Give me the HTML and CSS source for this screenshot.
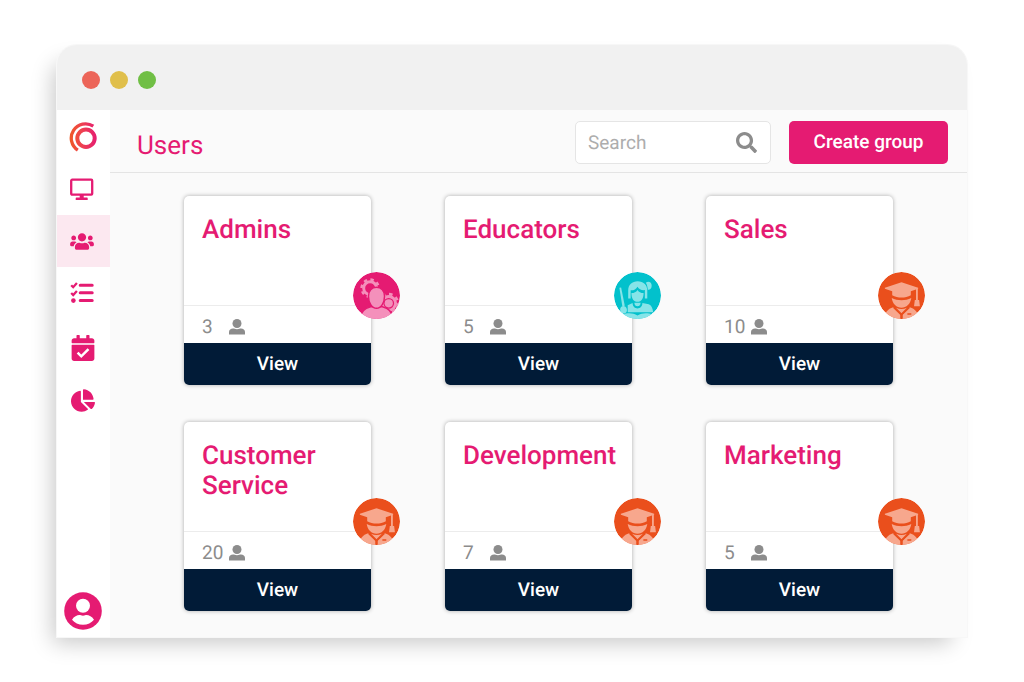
FILE: index.html
```html
<!DOCTYPE html>
<html lang="en">
<head>
<meta charset="utf-8">
<meta name="viewport" content="width=device-width, initial-scale=1">
<title>Users</title>
<link rel="stylesheet" href="styles.css">
</head>
<body>
<svg class="sprite" aria-hidden="true">
  <defs>
    <clipPath id="disc"><circle cx="24" cy="24" r="24"/></clipPath>
    <symbol id="person" viewBox="0 0 16 16">
      <circle cx="8" cy="4.500" r="4.500"/>
      <path d="M0 15.400V13c0-2.200 1.800-3.400 4-3.400 1.200 0 2 .6 4 .6s2.800-.6 4-.6c2.200 0 4 1.200 4 3.400v2.400z"/>
    </symbol>
    <symbol id="admin" viewBox="0 0 48 48">
      <g clip-path="url(#disc)">
        <circle cx="24" cy="24" r="24" fill="#e51b72"/>
        <g fill="none" stroke="#f490bb">
          <circle cx="17.500" cy="16.500" r="6.600" stroke-width="3"/>
          <circle cx="17.500" cy="16.500" r="8.800" stroke-width="2.400" stroke-dasharray="3.456 3.456"/>
          <circle cx="36.500" cy="32" r="7" stroke-width="3"/>
          <circle cx="36.500" cy="32" r="9.400" stroke-width="2.600" stroke-dasharray="3.690 3.690"/>
        </g>
        <circle cx="36.500" cy="32" r="4.200" fill="#f490bb"/>
        <path d="M7 50c0-9 4-13 11-14.500h12c7 1.500 11 5.500 11 14.500z" fill="#f490bb" stroke="#e51b72" stroke-width="1.500"/>
        <path d="M24 15.500c-5 0-8.200 3.800-8.200 9.200 0 6.300 3.400 12.300 8.200 12.300s8.200-6 8.200-12.300c0-5.400-3.200-9.200-8.200-9.200z" fill="#f490bb" stroke="#e51b72" stroke-width="1.500"/>
      </g>
    </symbol>
    <symbol id="educator" viewBox="0 0 48 48">
      <g clip-path="url(#disc)">
        <circle cx="24" cy="24" r="24" fill="#02c1cc"/>
        <g fill="#86e4e8">
          <path d="M32.500 11c3-2.200 6-.2 6 3 0 3-2.200 4.500-4 4-.2-2.800-.7-5-2-7z"/>
          <path d="M14.500 27V19c0-6 4-9.500 9.700-9.500S34 13 34 19v8h-2.500v-8.500c-3.500.4-6-1-7.500-3.500-1.500 2.500-3.800 3.900-7 3.700V27z"/>
          <path d="M17.800 21.500c3 0 4.700-1 6.200-3.200 1.500 2.200 3.300 3.200 6.200 3.200 0 6-2.200 9-6.200 9s-6.200-3.500-6.200-9z"/>
          <path d="M14 41V34l5-2.400c0 7.400 10 7.400 10 0l6.500 1.400c2.600 1 4 4 4.500 8z"/>
          <path d="M20.800 31.500h6.400c0 4.800-6.400 4.800-6.400 0z"/>
          <path d="M5.500 16.200l1.800-.3L11 34.500l-2.500.6z"/>
          <path d="M7.500 35.500c2-1.500 5-.5 5.600 2.300s-.8 4.700-3.200 4.700c-3 0-5-4.700-2.400-7z"/>
          <path d="M8 43.500c6-2 11-2 16 .8 5-2.800 10-2.800 16-.8V48H8z"/>
        </g>
      </g>
    </symbol>
    <symbol id="graduate" viewBox="0 0 48 48">
      <g clip-path="url(#disc)">
        <circle cx="24" cy="24" r="24" fill="#ea4f1c"/>
        <g fill="#f7a78d">
          <path d="M7 16l17-5.500L41 16v1.200l-7.500 2.500v4c-5.500 3.200-13.500 3.200-19 0v-4L7 17.200z"/>
          <path d="M38.800 17h1.900v11.500h1.300l.8 6.500h-6l.8-6.500h1.200z"/>
          <path d="M14 26.500c6 3 14 3 20 0-.8 6-5 10-10 10s-9.200-4-10-10z"/>
          <path d="M6 48c1-6.500 4-10.500 9.500-12l7.300 7.500V48zM42 48c-1-6.500-4-10.500-9.500-12l-7.300 7.500V48z"/>
          <path d="M18.500 36.500c3.400 1.800 7.600 1.800 11 0L24 42z"/>
        </g>
        <path d="M16 36.200l7.900 7.600 8.100-7.600M24 43v5M30 42.800h4" fill="none" stroke="#ea4f1c" stroke-width="1.500"/>
      </g>
    </symbol>
  </defs>
</svg>

<div class="window">
  <div class="titlebar">
    <span class="dot dot-red"></span>
    <span class="dot dot-yellow"></span>
    <span class="dot dot-green"></span>
  </div>
  <div class="app">
    <nav class="sidebar" aria-label="Main">
      <a class="logo" href="#" aria-label="Home">
        <svg width="28" height="30" viewBox="0 0 28 30" fill="none">
          <defs>
            <linearGradient id="flame" gradientUnits="userSpaceOnUse" x1="0" y1="0" x2="28" y2="0">
              <stop offset="0" stop-color="#f05a22"/><stop offset=".45" stop-color="#ee4250"/><stop offset="1" stop-color="#e51b72"/>
            </linearGradient>
          </defs>
          <circle cx="17" cy="16.200" r="8.700" stroke="url(#flame)" stroke-width="4"/>
          <path d="M24.300 4.200A13.200 13.200 0 0 0 8.800 28.200" stroke="url(#flame)" stroke-width="3.300"/>
        </svg>
      </a>
      <a class="nav-item" href="#" aria-label="Dashboard">
        <svg width="24" height="22" viewBox="0 0 24 22"><rect x="1.200" y="1.700" width="21" height="15" rx="1" fill="none" stroke="currentColor" stroke-width="2.300"/><path d="M9.700 17h4v2.500H17q.7 0 .7.700V22H5.700v-1.800q0-.7.700-.7h3.300z"/></svg>
      </a>
      <a class="nav-item nav-current" href="#" aria-label="Users" aria-current="page">
        <svg width="24" height="19" viewBox="0 0 640 512"><path d="M96 224c35.300 0 64-28.700 64-64s-28.700-64-64-64-64 28.700-64 64 28.700 64 64 64zm448 0c35.300 0 64-28.700 64-64s-28.700-64-64-64-64 28.700-64 64 28.700 64 64 64zm32 32h-64c-17.600 0-33.500 7.100-45.100 18.600 40.300 22.100 68.900 62 75.100 109.400h66c17.700 0 32-14.300 32-32v-32c0-35.300-28.700-64-64-64zm-256 0c61.900 0 112-50.100 112-112S381.900 32 320 32 208 82.100 208 144s50.100 112 112 112zm76.800 32h-8.300c-20.800 10-43.900 16-68.500 16s-47.600-6-68.500-16h-8.300C179.600 288 128 339.600 128 403.200V432c0 26.500 21.500 48 48 48h288c26.500 0 48-21.500 48-48v-28.800c0-63.600-51.600-115.200-115.200-115.200zm-223.700-13.400C161.500 263.100 145.600 256 128 256H64c-35.300 0-64 28.700-64 64v32c0 17.700 14.300 32 32 32h65.900c6.300-47.400 34.900-87.300 75.200-109.400z"/></svg>
      </a>
      <a class="nav-item" href="#" aria-label="Tasks">
        <svg width="24" height="22" viewBox="0 0 24 22"><g fill="none" stroke="currentColor"><path d="M1.200 3.200l2 2L6.900 1.100M1.200 11l2 2 3.700-4.100" stroke-width="2.300"/><path d="M10.200 3.200h12M10.200 10.800h12M10.200 18.600h12" stroke-width="3" stroke-linecap="round"/></g><circle cx="3.400" cy="18.600" r="2.300"/></svg>
      </a>
      <a class="nav-item nav-apart" href="#" aria-label="Calendar">
        <svg width="24" height="26" viewBox="0 0 448 512"><path d="M436 160H12c-6.600 0-12-5.400-12-12v-36c0-26.500 21.500-48 48-48h48V12c0-6.600 5.400-12 12-12h40c6.600 0 12 5.400 12 12v52h128V12c0-6.600 5.400-12 12-12h40c6.600 0 12 5.400 12 12v52h48c26.500 0 48 21.500 48 48v36c0 6.600-5.400 12-12 12zM12 192h424c6.600 0 12 5.400 12 12v260c0 26.500-21.500 48-48 48H48c-26.500 0-48-21.500-48-48V204c0-6.600 5.400-12 12-12z"/><path d="M118 347l72 72 142-142" fill="none" stroke="#fff" stroke-width="50"/></svg>
      </a>
      <a class="nav-item" href="#" aria-label="Reports">
        <svg width="24" height="23" viewBox="0 0 544 512"><path d="M527.790 288H290.500l158.030 158.030c6.040 6.040 15.980 6.530 22.190.68 38.700-36.460 65.320-85.610 73.130-140.860 1.340-9.460-6.510-17.850-16.060-17.850zm-15.830-64.800C503.720 103.740 408.260 8.280 288.800.04 279.680-.59 272 7.100 272 16.240V240h223.770c9.140 0 16.820-7.680 16.190-16.800zM224 288V50.710c0-9.550-8.390-17.400-17.840-16.060C86.990 51.490-4.100 155.600.14 280.370 4.500 408.510 114.830 513.590 243.030 511.980c50.400-.63 96.970-16.870 135.260-44.030 7.900-5.600 8.420-17.230 1.570-24.080L224 288z"/></svg>
      </a>
      <a class="profile" href="#" aria-label="Profile">
        <svg width="38" height="38" viewBox="0 0 38 38"><circle cx="19" cy="19" r="18.800"/><g fill="#fff"><circle cx="19" cy="13.700" r="7"/><path d="M8 27.700c2-3 5-4.600 7.500-4.600 1 0 1.800.6 3.500.6s2.500-.6 3.500-.6c2.500 0 5.500 1.600 7.500 4.600-2.500 3-6.500 5-11 5s-8.500-2-11-5z"/></g></svg>
      </a>
    </nav>
    <main class="main">
      <header class="header">
        <h1 class="page-title">Users</h1>
        <div class="search">
          <input class="search-input" type="search" placeholder="Search" aria-label="Search">
          <svg class="search-icon" width="21" height="21" viewBox="0 0 512 512" aria-hidden="true"><path d="M505 442.700L405.300 343c-4.500-4.500-10.600-7-17-7H372c27.600-35.300 44-79.700 44-128C416 93.100 322.900 0 208 0S0 93.100 0 208s93.100 208 208 208c48.300 0 92.700-16.400 128-44v16.300c0 6.400 2.500 12.500 7 17l99.700 99.700c9.400 9.400 24.600 9.400 33.900 0l28.300-28.300c9.400-9.400 9.400-24.600.1-34zM208 336c-70.700 0-128-57.200-128-128 0-70.700 57.200-128 128-128 70.700 0 128 57.200 128 128 0 70.700-57.200 128-128 128z"/></svg>
        </div>
        <button class="create" type="button">Create group</button>
      </header>
      <section class="groups" aria-label="Groups">
        <article class="card">
          <h2 class="card-title">Admins</h2>
          <div class="members"><span class="count">3</span><svg class="person"><use href="#person"/></svg></div>
          <button class="view" type="button">View</button>
          <svg class="badge"><use href="#admin"/></svg>
        </article>
        <article class="card">
          <h2 class="card-title">Educators</h2>
          <div class="members"><span class="count">5</span><svg class="person"><use href="#person"/></svg></div>
          <button class="view" type="button">View</button>
          <svg class="badge"><use href="#educator"/></svg>
        </article>
        <article class="card">
          <h2 class="card-title">Sales</h2>
          <div class="members"><span class="count">10</span><svg class="person"><use href="#person"/></svg></div>
          <button class="view" type="button">View</button>
          <svg class="badge badge-outer"><use href="#graduate"/></svg>
        </article>
        <article class="card">
          <h2 class="card-title">Customer Service</h2>
          <div class="members"><span class="count">20</span><svg class="person"><use href="#person"/></svg></div>
          <button class="view" type="button">View</button>
          <svg class="badge"><use href="#graduate"/></svg>
        </article>
        <article class="card">
          <h2 class="card-title">Development</h2>
          <div class="members"><span class="count">7</span><svg class="person"><use href="#person"/></svg></div>
          <button class="view" type="button">View</button>
          <svg class="badge"><use href="#graduate"/></svg>
        </article>
        <article class="card">
          <h2 class="card-title">Marketing</h2>
          <div class="members"><span class="count">5</span><svg class="person"><use href="#person"/></svg></div>
          <button class="view" type="button">View</button>
          <svg class="badge badge-outer"><use href="#graduate"/></svg>
        </article>
      </section>
    </main>
  </div>
</div>
</body>
</html>
```
FILE: styles.css
```css
:root {
  --pink: #e51b72;
  --navy: #011b37;
  --grey: #8c8c8c;
}

* {
  box-sizing: border-box;
}

body {
  margin: 0;
  padding: 45px 57px;
  background: #fff;
  font-family: Roboto, "Liberation Sans", sans-serif;
  text-rendering: geometricPrecision;
}

button,
input {
  font-family: inherit;
  text-rendering: inherit;
}

.sprite {
  position: absolute;
  width: 0;
  height: 0;
}

.window {
  border-radius: 20px 20px 0 0;
  background: #fafafa;
  box-shadow: 0 0 0 1px #f7f7f7, -10px 12px 22px -6px rgba(0, 0, 0, 0.22);
}

.titlebar {
  display: flex;
  align-items: center;
  gap: 10px;
  height: 65px;
  padding: 4px 25px 0;
  border-radius: 20px 20px 0 0;
  background: #f1f1f1;
}

.dot {
  width: 18px;
  height: 18px;
  border-radius: 50%;
}

.dot-red {
  background: #ec6559;
}

.dot-yellow {
  background: #e0bf4b;
}

.dot-green {
  background: #70bf45;
}

.app {
  display: flex;
}

.sidebar {
  display: flex;
  flex-direction: column;
  flex: none;
  width: 53px;
  background: #fff;
  color: var(--pink);
}

.sidebar svg {
  fill: currentColor;
}

.sidebar .logo svg {
  fill: none;
}

.sidebar a {
  display: flex;
  align-items: center;
  color: inherit;
}

.logo {
  height: 53px;
  padding-left: 12px;
}

.nav-item {
  height: 52px;
  padding-left: 13px;
}

.nav-current {
  background: #fce8f0;
}

.nav-apart {
  margin-top: 3px;
}

.nav-apart,
.nav-apart ~ .nav-item {
  padding-left: 14px;
}

.profile {
  margin-top: auto;
  padding: 0 0 7px 7px;
}

.main {
  flex: 1;
  min-width: 0;
}

.header {
  display: flex;
  align-items: flex-end;
  gap: 18px;
  padding: 11px 19px 8px 27px;
  border-bottom: 1px solid #e4e4e4;
}

.page-title {
  flex: 1;
  margin: 0;
  color: var(--pink);
  font-size: 26px;
  font-weight: 400;
  line-height: 36px;
}

.search {
  display: flex;
  align-items: center;
  width: 196px;
  height: 43px;
  padding: 0 13px 0 12px;
  border: 1px solid #e5e5e5;
  border-radius: 5px;
  background: #fff;
}

.search-input {
  flex: 1;
  min-width: 0;
  padding: 0;
  border: 0;
  outline: 0;
  background: none;
  appearance: none;
  font-size: 19px;
}

.search-input::placeholder {
  color: #adadad;
  opacity: 1;
}

.search-icon {
  fill: var(--grey);
}

.create {
  width: 159px;
  height: 43px;
  padding: 0 0 2px;
  border: 0;
  border-radius: 5px;
  background: var(--pink);
  color: #fff;
  font-size: 19px;
  font-weight: 500;
}

.groups {
  display: grid;
  grid-template-columns: repeat(3, 1fr);
  gap: 37px 74px;
  padding: 23px 74px 26px;
}

.card {
  position: relative;
  display: flex;
  flex-direction: column;
  min-height: 189px;
  border-radius: 5px;
  background: #fff;
  box-shadow: 0 0 4px rgba(0, 0, 0, 0.32);
}

.card-title {
  flex: 1;
  margin: 0;
  padding: 19px 12px 0 18px;
  color: var(--pink);
  font-size: 26px;
  font-weight: 500;
  line-height: 30px;
}

.members {
  display: flex;
  align-items: center;
  height: 38px;
  padding: 4px 18px 0;
  border-top: 1px solid #ececec;
}

.count {
  min-width: 27px;
  color: var(--grey);
  font-size: 19px;
}

.person {
  width: 16px;
  height: 16px;
  fill: var(--grey);
}

.view {
  height: 42px;
  padding: 0 0 2px;
  border: 0;
  border-radius: 0 0 5px 5px;
  background: var(--navy);
  color: #fff;
  font-size: 19px;
  font-weight: 500;
}

.badge {
  position: absolute;
  right: -29px;
  bottom: 66px;
  width: 47px;
  height: 47px;
}

.badge-outer {
  right: -32px;
}
```
